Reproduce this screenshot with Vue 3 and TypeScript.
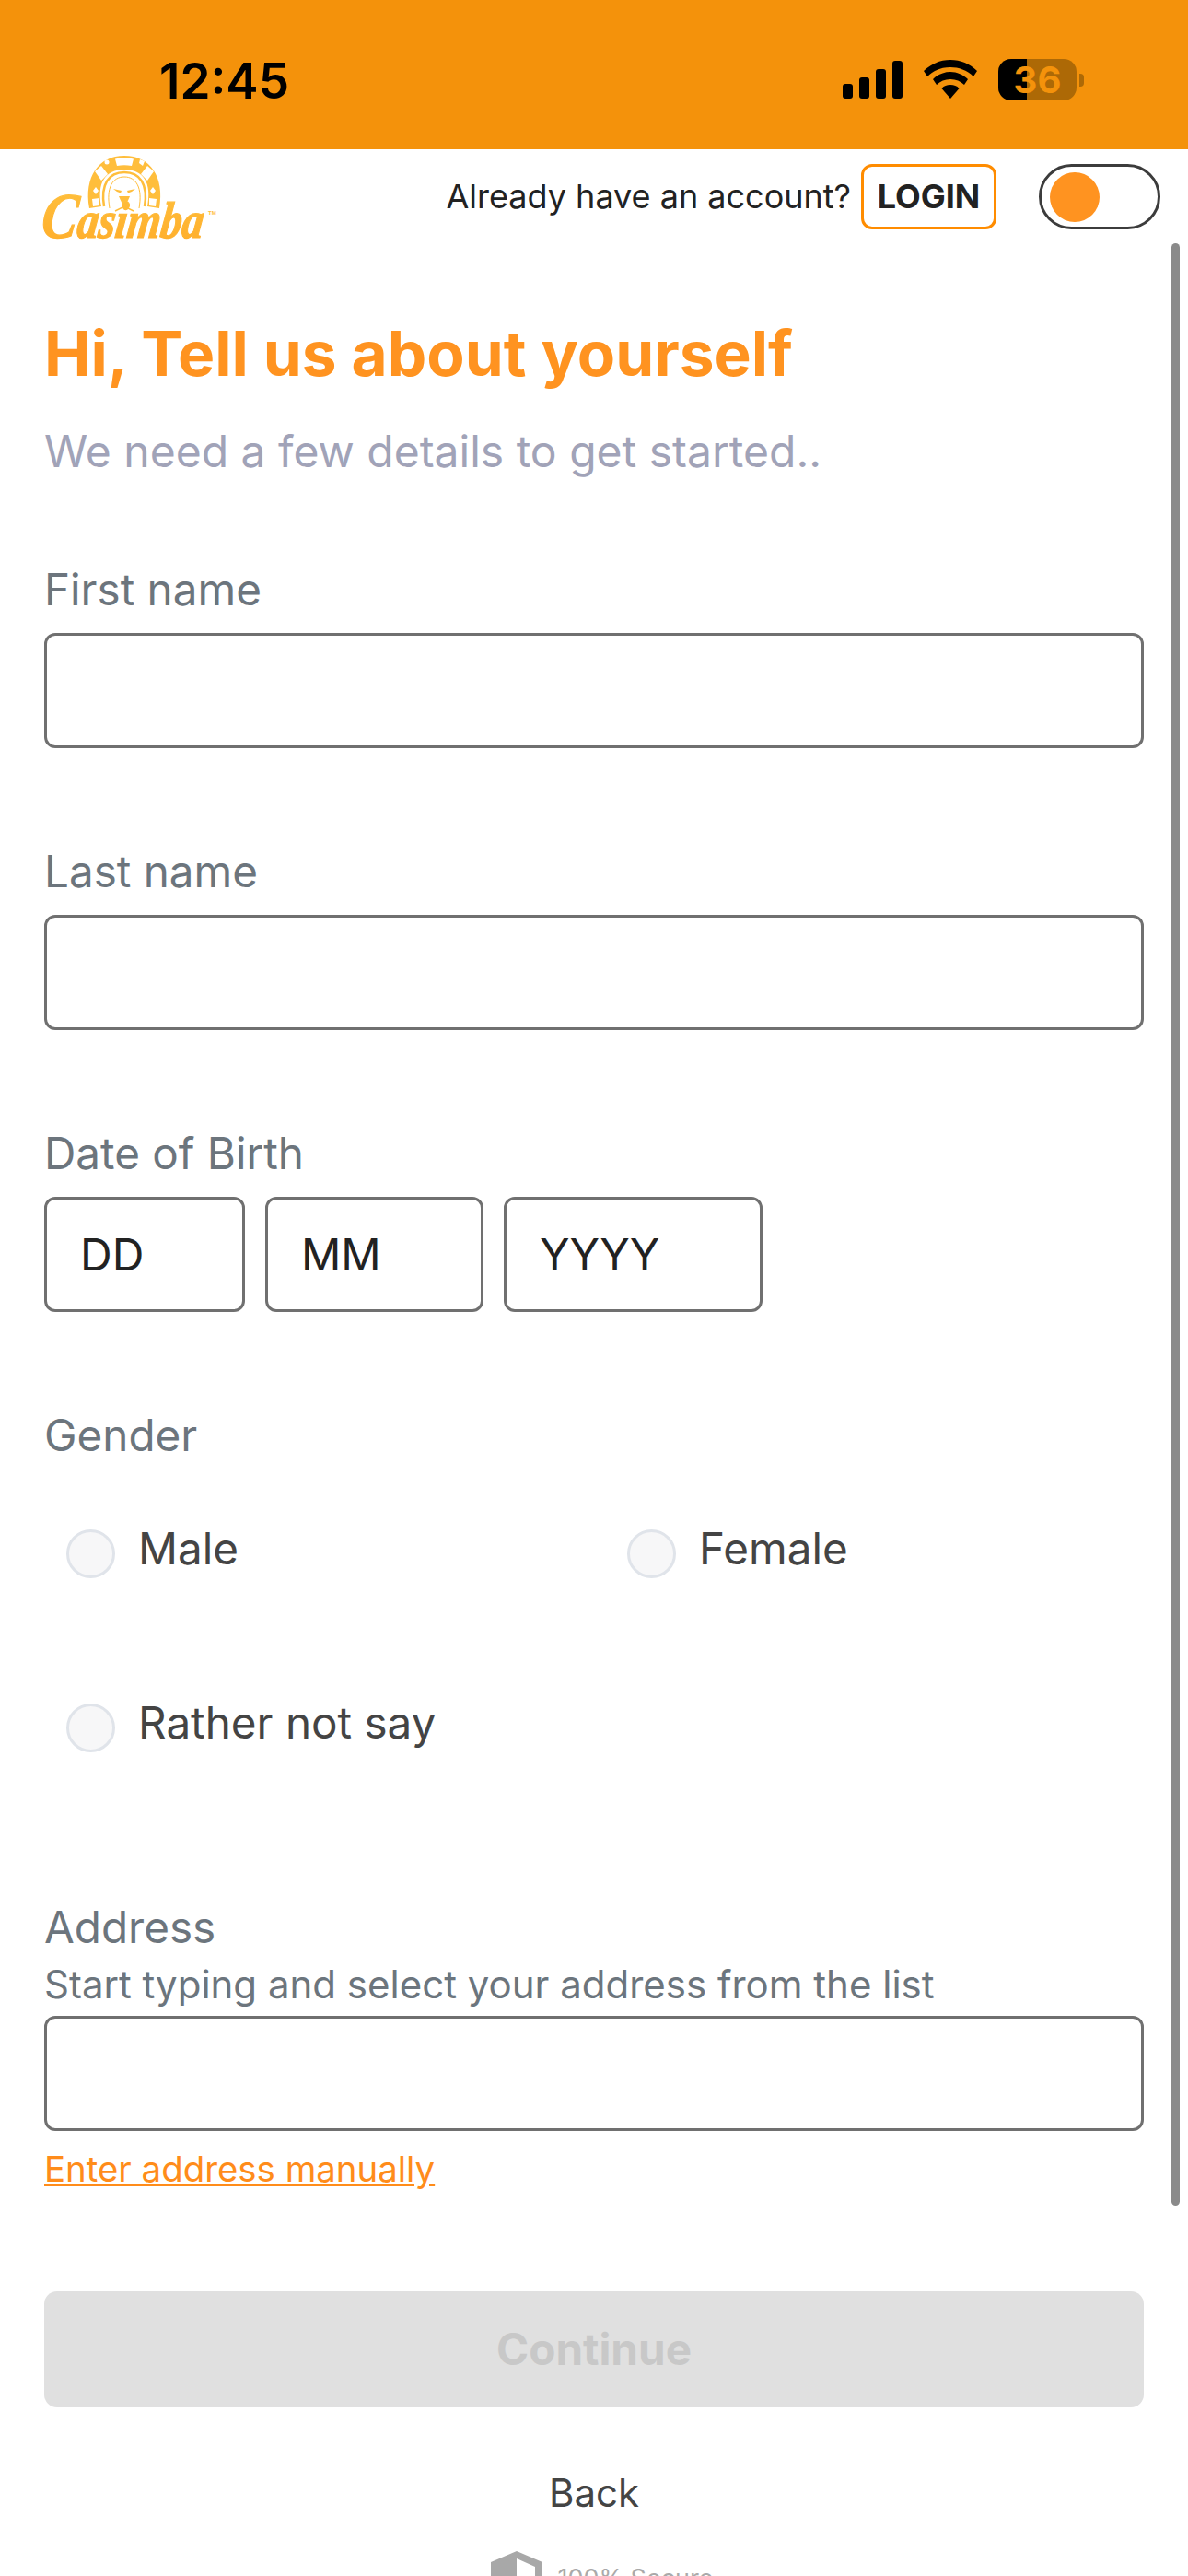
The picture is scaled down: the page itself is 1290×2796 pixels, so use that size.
<script setup lang="ts">
const bars = [
  { x: 916, y: 91 },
  { x: 934, y: 84 },
  { x: 952, y: 75 },
  { x: 970, y: 66 },
];
</script>

<template>
  <div class="page">
    <div class="status">
      <span class="time">12:45</span>
      <div class="status-icons">
        <svg class="signal" viewBox="916 66 65 41" width="65" height="41">
          <rect v-for="b in bars" :key="b.x" :x="b.x" :y="b.y" width="11" :height="107 - b.y" rx="3" fill="#000" />
        </svg>
        <svg class="wifi" viewBox="0 0 58 42" width="58" height="42">
          <path d="M29 0C40 0 50 4 58 12L54 18C47 11 38 8 29 8C20 8 11 11 4 18L0 12C8 4 18 0 29 0Z" fill="#000" />
          <path d="M29 13C36 13 43 16 48 21L44 27C40 23 35 21 29 21C23 21 18 23 14 27L10 21C15 16 22 13 29 13Z" fill="#000" />
          <path d="M29 27C33 27 36 28 38.500 31L29 42L19.500 31C22 28 25 27 29 27Z" fill="#000" />
        </svg>
        <div class="battery">
          <div class="battery-body">
            <span class="battery-fill"></span>
            <span class="battery-num">36</span>
          </div>
          <span class="battery-cap"></span>
        </div>
      </div>
    </div>

    <header class="topbar">
      <svg class="logo" viewBox="40 165 200 100" width="200" height="100">
        <defs>
          <linearGradient id="lg" x1="0" y1="0" x2="0" y2="1">
            <stop offset="0" stop-color="#ffc23e" />
            <stop offset="1" stop-color="#ffac2a" />
          </linearGradient>
        </defs>
        <path d="M97 226C91 192 107 169 135 169C163 169 179 192 173 226L160 224C165 199 156 184 135 184C114 184 105 199 110 224Z" fill="#ffbe3c" />
        <g fill="#fff">
          <path d="M125 172.500Q135 170 145 172.500L143 180Q135 178.500 127 180Z" />
          <path d="M103 186L110 180L117 189L110 196Z" />
          <path d="M167 186L160 180L153 189L160 196Z" />
          <path d="M100 216L108 215L108 223L101 224Z" />
          <path d="M170 216L162 215L162 223L169 224Z" />
          <circle cx="116" cy="176" r="2.500" />
          <path d="M152 173L157 175L155 180L151 177Z" />
          <path d="M101 207L104 203L107 207L104 211Z" />
          <path d="M169 207L166 203L163 207L166 211Z" />
        </g>
        <path d="M113 224C109 200 118 187 135 187C152 187 161 200 157 224" fill="none" stroke="#ffbe3c" stroke-width="2.500" />
        <path d="M119 226C115 204 122 192 135 192C148 192 155 204 151 226" fill="none" stroke="#ffbe3c" stroke-width="1" />
        <path d="M123 205L132 207L131 209.500L127 208Z M147 205L138 207L139 209.500L143 208Z" fill="#ffbe3c" />
        <path d="M129 213H141L137 222H133Z" fill="#ffbe3c" />
        <path d="M125 229L135 224L145 229" fill="none" stroke="#ffbe3c" stroke-width="1.500" />
        <text x="45" y="258" transform="translate(30 0) skewX(-7)" class="logo-word" textLength="176" lengthAdjust="spacingAndGlyphs" fill="url(#lg)" stroke="url(#lg)" stroke-width="1.200"><tspan class="logo-c">C</tspan>asimba</text>
        <text x="226" y="233" class="logo-tm" fill="#ffbe3c">TM</text>
      </svg>
      <div class="account">
        <span class="already">Already have an account?</span>
        <span class="login">LOGIN</span>
        <span class="toggle"><span class="knob"></span></span>
      </div>
    </header>

    <main class="form">
      <h1 class="title">Hi, Tell us about yourself</h1>
      <p class="subtitle">We need a few details to get started..</p>

      <section class="field">
        <label class="label">First name</label>
        <input class="input" type="text" />
      </section>

      <section class="field">
        <label class="label">Last name</label>
        <input class="input" type="text" />
      </section>

      <section class="field">
        <label class="label">Date of Birth</label>
        <div class="dob">
          <input class="input dd" type="text" placeholder="DD" />
          <input class="input mm" type="text" placeholder="MM" />
          <input class="input yy" type="text" placeholder="YYYY" />
        </div>
      </section>

      <section class="gender">
        <div class="label">Gender</div>
        <div class="radios">
          <div class="radio-row"><span class="radio"></span><span class="radio-text">Male</span></div>
          <div class="radio-row"><span class="radio"></span><span class="radio-text">Female</span></div>
          <div class="radio-row"><span class="radio"></span><span class="radio-text">Rather not say</span></div>
        </div>
      </section>

      <section class="address">
        <div class="label">Address</div>
        <div class="hint">Start typing and select your address from the list</div>
        <input class="input" type="text" />
        <a class="manual">Enter address manually</a>
      </section>

      <div class="continue">Continue</div>
      <div class="back">Back</div>
      <div class="secure">
        <svg class="shield" viewBox="0 0 56 64" width="56" height="64">
          <path d="M28 0L56 12V36C56 50 44 60 28 64C12 60 0 50 0 36V12Z" fill="#a8a8a8" />
          <path d="M28 8L48 17V36C48 46 39 53 28 56Z" fill="#fff" />
        </svg>
        <span>100% Secure</span>
      </div>
    </main>

    <div class="scrollbar"></div>
  </div>
</template>

<style>
html, body { margin: 0; background: #fff; }
</style>

<style scoped>
.page {
  position: relative;
  width: 1290px;
  height: 2796px;
  overflow: hidden;
  background: #fff;
  font-family: Inter, "Liberation Sans", sans-serif;
}
.status {
  height: 162px;
  background: #f4920b;
  display: flex;
  justify-content: space-between;
  box-sizing: border-box;
  padding: 59px 113px 0 173px;
}
.time {
  font-size: 53px;
  line-height: 58px;
  font-weight: 600;
  color: #000;
}
.status-icons {
  display: flex;
  align-items: flex-start;
  padding-top: 5px;
}
.signal { display: block; margin-top: 2px; }
.wifi { display: block; margin-left: 23px; margin-top: 1px; }
.battery { display: flex; align-items: center; margin-left: 23px; }
.battery-body {
  position: relative;
  width: 85px;
  height: 45px;
  border-radius: 14px;
  background: #ad6906;
  display: flex;
  align-items: center;
  justify-content: center;
}
.battery-fill {
  position: absolute;
  left: 0;
  top: 0;
  bottom: 0;
  width: 31px;
  border-radius: 14px 0 0 14px;
  background: #000;
}
.battery-num {
  position: relative;
  font-size: 40px;
  font-weight: 700;
  line-height: 45px;
  color: #f4920b;
}
.battery-cap {
  width: 5px;
  height: 14px;
  margin-left: 3px;
  border-radius: 0 4px 4px 0;
  background: #ad6906;
}
.topbar {
  height: 102px;
  display: flex;
  justify-content: space-between;
  box-sizing: border-box;
  padding: 3px 30px 0 40px;
}
.logo { display: block; overflow: visible; }
.logo-word {
  font-family: "Liberation Serif", serif;
  font-style: italic;
  font-weight: 700;
  font-size: 56px;
}
.logo-c { font-size: 70px; }
.logo-tm {
  font-family: "Liberation Sans", sans-serif;
  font-size: 6px;
  font-weight: 700;
}
.account {
  display: flex;
  align-items: flex-start;
  padding-top: 13px;
}
.already {
  font-size: 36px;
  line-height: 71px;
  color: #222;
  margin-right: 11px;
}
.login {
  box-sizing: border-box;
  width: 147px;
  height: 71px;
  border: 3px solid #ff8c00;
  border-radius: 12px;
  font-size: 36px;
  line-height: 65px;
  font-weight: 700;
  color: #222;
  text-align: center;
}
.toggle {
  box-sizing: border-box;
  width: 132px;
  height: 71px;
  margin-left: 46px;
  border: 3px solid #3c3c3c;
  border-radius: 36px;
  padding: 6px 9px;
}
.knob {
  display: block;
  width: 54px;
  height: 54px;
  border-radius: 50%;
  background: #ff9320;
}
.form {
  padding: 0 48px;
}
.title {
  margin: 76px 0 0;
  font-size: 67.500px;
  line-height: 88px;
  font-weight: 700;
  color: #ff9320;
}
.subtitle {
  margin: 34px 0 0;
  font-size: 48px;
  line-height: 56px;
  color: #a1a3b8;
}
.label {
  font-size: 47.600px;
  line-height: 56px;
  color: #6c757d;
}
.field {
  padding-top: 94px;
  padding-bottom: 12px;
}
.input {
  display: block;
  box-sizing: border-box;
  width: 1194px;
  height: 125px;
  margin: 19px 0 0;
  padding: 0 36px;
  border: 3px solid #707070;
  border-radius: 12px;
  background: #fff;
  font-family: inherit;
  font-size: 48px;
  outline: none;
}
.input::placeholder {
  color: #222;
  opacity: 1;
}
.dob {
  display: flex;
  gap: 22px;
  margin-top: 19px;
}
.dob .input { margin: 0; }
.dd { width: 218px; }
.mm { width: 237px; }
.yy { width: 281px; }
.gender { padding-top: 94px; }
.radios {
  display: grid;
  grid-template-columns: 609px 1fr;
  row-gap: 136px;
  padding: 74px 0 0 24px;
}
.radio-row {
  display: flex;
  align-items: center;
  gap: 25px;
  height: 53px;
  font-size: 47.600px;
  color: #444;
}
.radio-text { padding-bottom: 12px; }
.radio {
  box-sizing: border-box;
  width: 53px;
  height: 53px;
  border-radius: 50%;
  border: 3px solid #e0e4ea;
  background: #f7f7f8;
}
.address { padding-top: 162px; }
.hint {
  margin-top: 10px;
  font-size: 42px;
  line-height: 48px;
  color: #6c757d;
}
.address .input { margin-top: 10px; }
.manual {
  display: block;
  margin-top: 17px;
  font-size: 38.400px;
  line-height: 48px;
  color: #ff8c1a;
  text-decoration: underline;
}
.continue {
  margin-top: 109px;
  height: 126px;
  border-radius: 14px;
  background: #e0e0e0;
  color: #c8c8c8;
  font-size: 47.600px;
  font-weight: 700;
  line-height: 126px;
  text-align: center;
}
.back {
  margin-top: 65px;
  font-size: 42px;
  line-height: 56px;
  color: #444;
  text-align: center;
}
.secure {
  display: flex;
  justify-content: center;
  align-items: flex-start;
  gap: 16px;
  margin-top: 35px;
  margin-left: 18px;
  font-size: 27px;
  line-height: 36px;
  color: #aaa;
}
.secure span { margin-top: 12px; }
.shield { display: block; }
.scrollbar {
  position: absolute;
  left: 1272px;
  top: 264px;
  width: 9px;
  height: 2130px;
  border-radius: 5px;
  background: #8a8a8a;
}
</style>
